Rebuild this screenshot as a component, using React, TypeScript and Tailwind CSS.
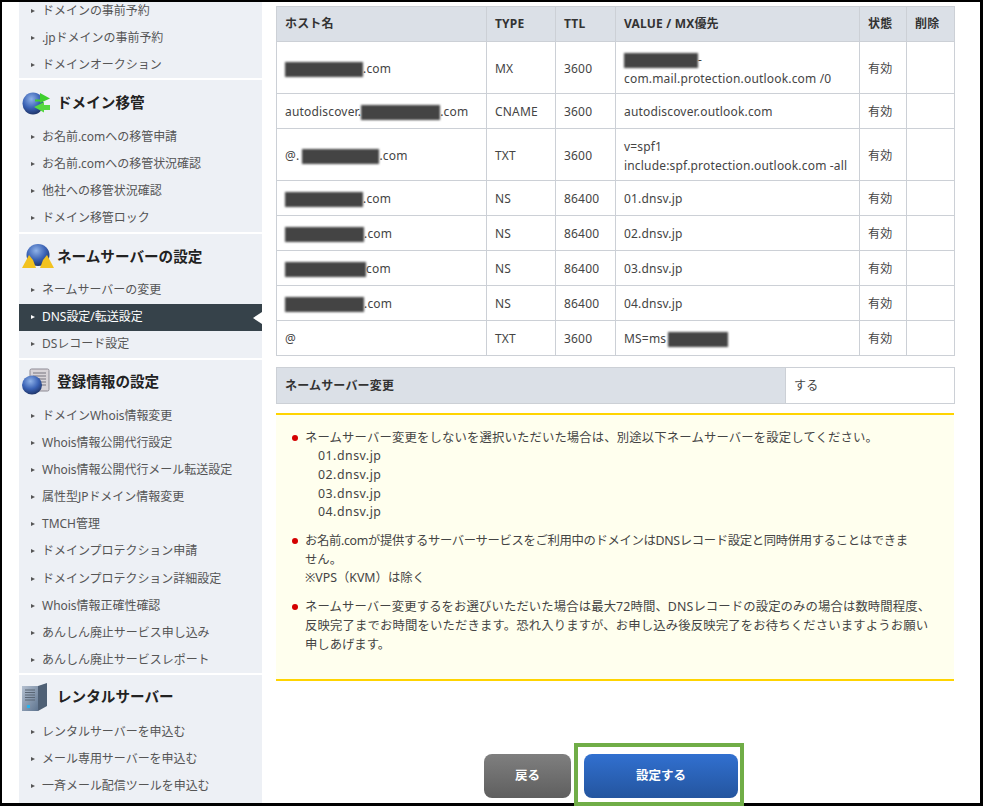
import React from "react";

const FONT = "[font-family:'Noto_Sans','Noto_Sans_CJK_JP',sans-serif]";

function Transfer() {
  return (
    <svg width="32" height="24" viewBox="0 0 32 24">
      <defs>
        <radialGradient id="g1" cx="0.42" cy="0.3" r="0.75">
          <stop offset="0" stopColor="#8fb2e8" />
          <stop offset="0.55" stopColor="#3a62b5" />
          <stop offset="1" stopColor="#1c2f5f" />
        </radialGradient>
      </defs>
      <ellipse cx="12" cy="12.5" rx="10.5" ry="11" fill="url(#g1)" />
      <path d="M14 8.5 L19 8.5 L19 2 L29 7.5 L19 12 L19 10.5 L14 10.5Z" fill="#3ecf2e" />
      <path d="M23 14 L23 11 L13 16 L23 21.5 L23 19 L29 19 L29 14Z" fill="#55d83f" />
    </svg>
  );
}

function Nameserver() {
  return (
    <svg width="34" height="26" viewBox="0 0 34 26">
      <defs>
        <radialGradient id="g2" cx="0.42" cy="0.3" r="0.75">
          <stop offset="0" stopColor="#8fb2e8" />
          <stop offset="0.55" stopColor="#3a62b5" />
          <stop offset="1" stopColor="#1c2f5f" />
        </radialGradient>
      </defs>
      <ellipse cx="17" cy="11" rx="11.5" ry="11" fill="url(#g2)" />
      <path d="M1 24 L8 11 L12 16 L15 24Z" fill="#f2c21f" />
      <path d="M33 24 L26 11 L22 16 L19 24Z" fill="#f2c21f" />
    </svg>
  );
}

function Registry() {
  return (
    <svg width="30" height="28" viewBox="0 0 30 28">
      <defs>
        <radialGradient id="g3" cx="0.42" cy="0.3" r="0.75">
          <stop offset="0" stopColor="#8fb2e8" />
          <stop offset="0.55" stopColor="#3a62b5" />
          <stop offset="1" stopColor="#1c2f5f" />
        </radialGradient>
      </defs>
      <rect x="9" y="1" width="19" height="22" rx="1.5" fill="#d8d4d8" stroke="#8d8a94" />
      <path d="M12 5H25M12 8H25M12 11H25M12 14H25M12 17H25" stroke="#77747e" strokeWidth="1.2" />
      <ellipse cx="11" cy="17" rx="10" ry="9.5" fill="url(#g3)" />
    </svg>
  );
}

function Server() {
  return (
    <svg width="28" height="30" viewBox="0 0 28 30">
      <defs>
        <linearGradient id="g4" x1="0" x2="1" y1="0" y2="1">
          <stop offset="0" stopColor="#b4c0d0" />
          <stop offset="1" stopColor="#5f7590" />
        </linearGradient>
      </defs>
      <path d="M1 4 L17 4 L26 1 L26 24 L17 29 L1 29Z" fill="#4f6075" />
      <path d="M1 4 L17 4 L17 29 L1 29Z" fill="url(#g4)" />
      <path d="M4 8H14M4 10.5H14M4 13H14M4 15.5H14M4 18H14" stroke="#5a6675" strokeWidth="1.2" />
      <rect x="6" y="23" width="3" height="3" fill="#27b4ee" />
    </svg>
  );
}

type Group = { title?: string; icon?: React.ReactNode; items: string[]; pb: string; hd?: string };

const groups: Group[] = [
  { items: ["ドメインの事前予約", ".jpドメインの事前予約", "ドメインオークション"], pb: "pb-0" },
  {
    title: "ドメイン移管",
    icon: <Transfer />,
    hd: "h-[43px] pt-[3px]",
    items: ["お名前.comへの移管申請", "お名前.comへの移管状況確認", "他社への移管状況確認", "ドメイン移管ロック"],
    pb: "pb-0",
  },
  {
    title: "ネームサーバーの設定",
    icon: <Nameserver />,
    hd: "h-[43px] pt-[3px]",
    items: ["ネームサーバーの変更", "DNS設定/転送設定", "DSレコード設定"],
    pb: "pb-0",
  },
  {
    title: "登録情報の設定",
    icon: <Registry />,
    hd: "h-[42.5px] pt-[1px]",
    items: [
      "ドメインWhois情報変更",
      "Whois情報公開代行設定",
      "Whois情報公開代行メール転送設定",
      "属性型JPドメイン情報変更",
      "TMCH管理",
      "ドメインプロテクション申請",
      "ドメインプロテクション詳細設定",
      "Whois情報正確性確認",
      "あんしん廃止サービス申し込み",
      "あんしん廃止サービスレポート",
    ],
    pb: "pb-0",
  },
  {
    title: "レンタルサーバー",
    icon: <Server />,
    hd: "h-[43px] pt-[1px]",
    items: ["レンタルサーバーを申込む", "メール専用サーバーを申込む", "一斉メール配信ツールを申込む"],
    pb: "pb-[20px]",
  },
];

function Blot({ w }: { w: string }) {
  return <span className={`inline-block h-[15px] bg-[#444444] blur-[1px] align-middle ${w}`} />;
}

const tall = "h-[52px] [&>td]:pt-[2px]";

const rows: { host: React.ReactNode; type: string; ttl: string; value: React.ReactNode; h: string }[] = [
  {
    host: (<><Blot w="w-[78px]" />.com</>),
    type: "MX",
    ttl: "3600",
    value: (<><Blot w="w-[74px]" />-<br />com.mail.protection.outlook.com /0</>),
    h: tall,
  },
  {
    host: (<>autodiscover.<Blot w="w-[79px]" />.com</>),
    type: "CNAME",
    ttl: "3600",
    value: "autodiscover.outlook.com",
    h: "h-[35px]",
  },
  {
    host: (<>@.<Blot w="ml-[3px] w-[77px]" />.com</>),
    type: "TXT",
    ttl: "3600",
    value: (<>v=spf1<br />include:spf.protection.outlook.com -all</>),
    h: tall,
  },
  { host: (<><Blot w="w-[78px]" />.com</>), type: "NS", ttl: "86400", value: "01.dnsv.jp", h: "h-[35px]" },
  { host: (<><Blot w="w-[79px]" />.com</>), type: "NS", ttl: "86400", value: "02.dnsv.jp", h: "h-[35px]" },
  { host: (<><Blot w="w-[81px]" />com</>), type: "NS", ttl: "86400", value: "03.dnsv.jp", h: "h-[35px]" },
  { host: (<><Blot w="w-[79px]" />.com</>), type: "NS", ttl: "86400", value: "04.dnsv.jp", h: "h-[35px]" },
  { host: "@", type: "TXT", ttl: "3600", value: (<>MS=ms<Blot w="ml-[2px] w-[60px]" /></>), h: "h-[35px]" },
];

const cell = "border border-[#ccd0d6] px-2 text-left align-middle font-normal tracking-[0.18px]";
const head = "border border-[#ccd0d6] bg-[#dbe0e7] px-2 text-left align-middle font-bold text-[#333333] tracking-[0.18px]";

function Note({ children, mt }: { children: React.ReactNode; mt: string }) {
  return (
    <li className={`flex ${mt}`}>
      <span className="mt-[6px] mr-[7px] ml-[16px] h-[6px] w-[6px] shrink-0 rounded-full bg-[#d40000]" />
      <div className="whitespace-nowrap">{children}</div>
    </li>
  );
}

export default function App() {
  return (
    <div className={`relative h-[806px] w-[983px] overflow-hidden bg-white ${FONT}`}>
      <div className="flex h-full w-full overflow-hidden border-t-2 border-r-[3px] border-b-[3px] border-l-2 border-black">
        <aside className="ml-[17px] w-[243px] shrink-0">
          <div className="-mt-[5px] flex flex-col gap-[2px]">
            {groups.map((g, i) => (
              <div key={i} className={`bg-[#edf0f5] ${g.pb}`}>
                {g.title && (
                  <div className={`flex items-center pl-[2px] ${g.hd}`}>
                    <span className="flex w-[36px] shrink-0 justify-start">{g.icon}</span>
                    <span className="text-[14.6px] font-bold text-[#222222]">{g.title}</span>
                  </div>
                )}
                {g.items.map((t) => {
                  const active = t === "DNS設定/転送設定";
                  return (
                    <div
                      key={t}
                      className={`relative flex h-[27.1px] items-center pl-[12px] text-[12px] tracking-[-0.03px] ${
                        active ? "bg-[#36424a] text-white" : "text-[#555555]"
                      }`}
                    >
                      <span
                        className={`mr-[7px] h-0 w-0 border-y-[2.5px] border-l-[4px] border-y-transparent ${
                          active ? "border-l-white" : "border-l-[#555555]"
                        }`}
                      />
                      {t}
                      {active && (
                        <span className="absolute top-[8px] right-0 h-0 w-0 border-y-[6.5px] border-r-[9px] border-y-transparent border-r-white" />
                      )}
                    </div>
                  );
                })}
              </div>
            ))}
          </div>
        </aside>

        <main className="ml-[14px] w-[678px] shrink-0 pt-[4px] text-[12px] text-[#444444]">
          <table className="w-[678px] table-fixed border-collapse">
            <colgroup>
              <col className="w-[210px]" />
              <col className="w-[69px]" />
              <col className="w-[60px]" />
              <col className="w-[244px]" />
              <col className="w-[47px]" />
              <col className="w-[48px]" />
            </colgroup>
            <thead>
              <tr className="h-[35px]">
                <th className={head}>ホスト名</th>
                <th className={head}>TYPE</th>
                <th className={head}>TTL</th>
                <th className={head}>VALUE / MX優先</th>
                <th className={head}>状態</th>
                <th className={head}>削除</th>
              </tr>
            </thead>
            <tbody>
              {rows.map((r, i) => (
                <tr key={i} className={`${r.h} leading-[19px]`}>
                  <td className={`${cell} whitespace-nowrap`}>{r.host}</td>
                  <td className={cell}>{r.type}</td>
                  <td className={cell}>{r.ttl}</td>
                  <td className={`${cell} whitespace-nowrap`}>{r.value}</td>
                  <td className={cell}>有効</td>
                  <td className={cell}></td>
                </tr>
              ))}
            </tbody>
          </table>

          <table className="mt-[11px] w-[678px] table-fixed border-collapse">
            <colgroup>
              <col className="w-[509px]" />
              <col className="w-[169px]" />
            </colgroup>
            <tbody>
              <tr className="h-[36px]">
                <th className={head}>ネームサーバー変更</th>
                <td className={cell}>する</td>
              </tr>
            </tbody>
          </table>

          <div className="mt-[9px] h-[268px] border-y-2 border-[#ffd400] bg-[#ffffee] pt-[13.5px] text-[12.35px] leading-[18.7px]">
            <ul>
              <Note mt="mt-0">
                <span className="tracking-[0.15px]">ネームサーバー変更をしないを選択いただいた場合は、別途以下ネームサーバーを設定してください。</span>
                <div className="pl-[13px] tracking-[0.5px]">
                  01.dnsv.jp
                  <br />
                  02.dnsv.jp
                  <br />
                  03.dnsv.jp
                  <br />
                  04.dnsv.jp
                </div>
              </Note>
              <Note mt="mt-[10px]">
                <span className="tracking-[-0.34px]">お名前.comが提供するサーバーサービスをご利用中のドメインはDNSレコード設定と同時併用することはできま</span>
                <br />
                せん。
                <br />
                ※VPS（KVM）は除く
              </Note>
              <Note mt="mt-[10px]">
                <span className="tracking-[0.12px]">ネームサーバー変更するをお選びいただいた場合は最大72時間、DNSレコードの設定のみの場合は数時間程度、</span>
                <br />
                <span className="tracking-[0.15px]">反映完了までお時間をいただきます。恐れ入りますが、お申し込み後反映完了をお待ちくださいますようお願い</span>
                <br />
                申しあげます。
              </Note>
            </ul>
          </div>

          <div className="mt-[73px] flex gap-[13px] pl-[208px]">
            <button className="h-[44px] w-[87px] rounded-[8px] bg-gradient-to-b from-[#7f7f7f] to-[#5f5f5f] text-[12.5px] font-bold text-white">
              戻る
            </button>
            <button className="h-[44px] w-[154px] rounded-[8px] bg-gradient-to-b from-[#3170d0] to-[#24559f] text-[12.5px] font-bold text-white">
              設定する
            </button>
          </div>
        </main>
      </div>
      <div className="absolute top-[743px] left-[574px] h-[63px] w-[170px] border-4 border-[#70ad47]" />
    </div>
  );
}
